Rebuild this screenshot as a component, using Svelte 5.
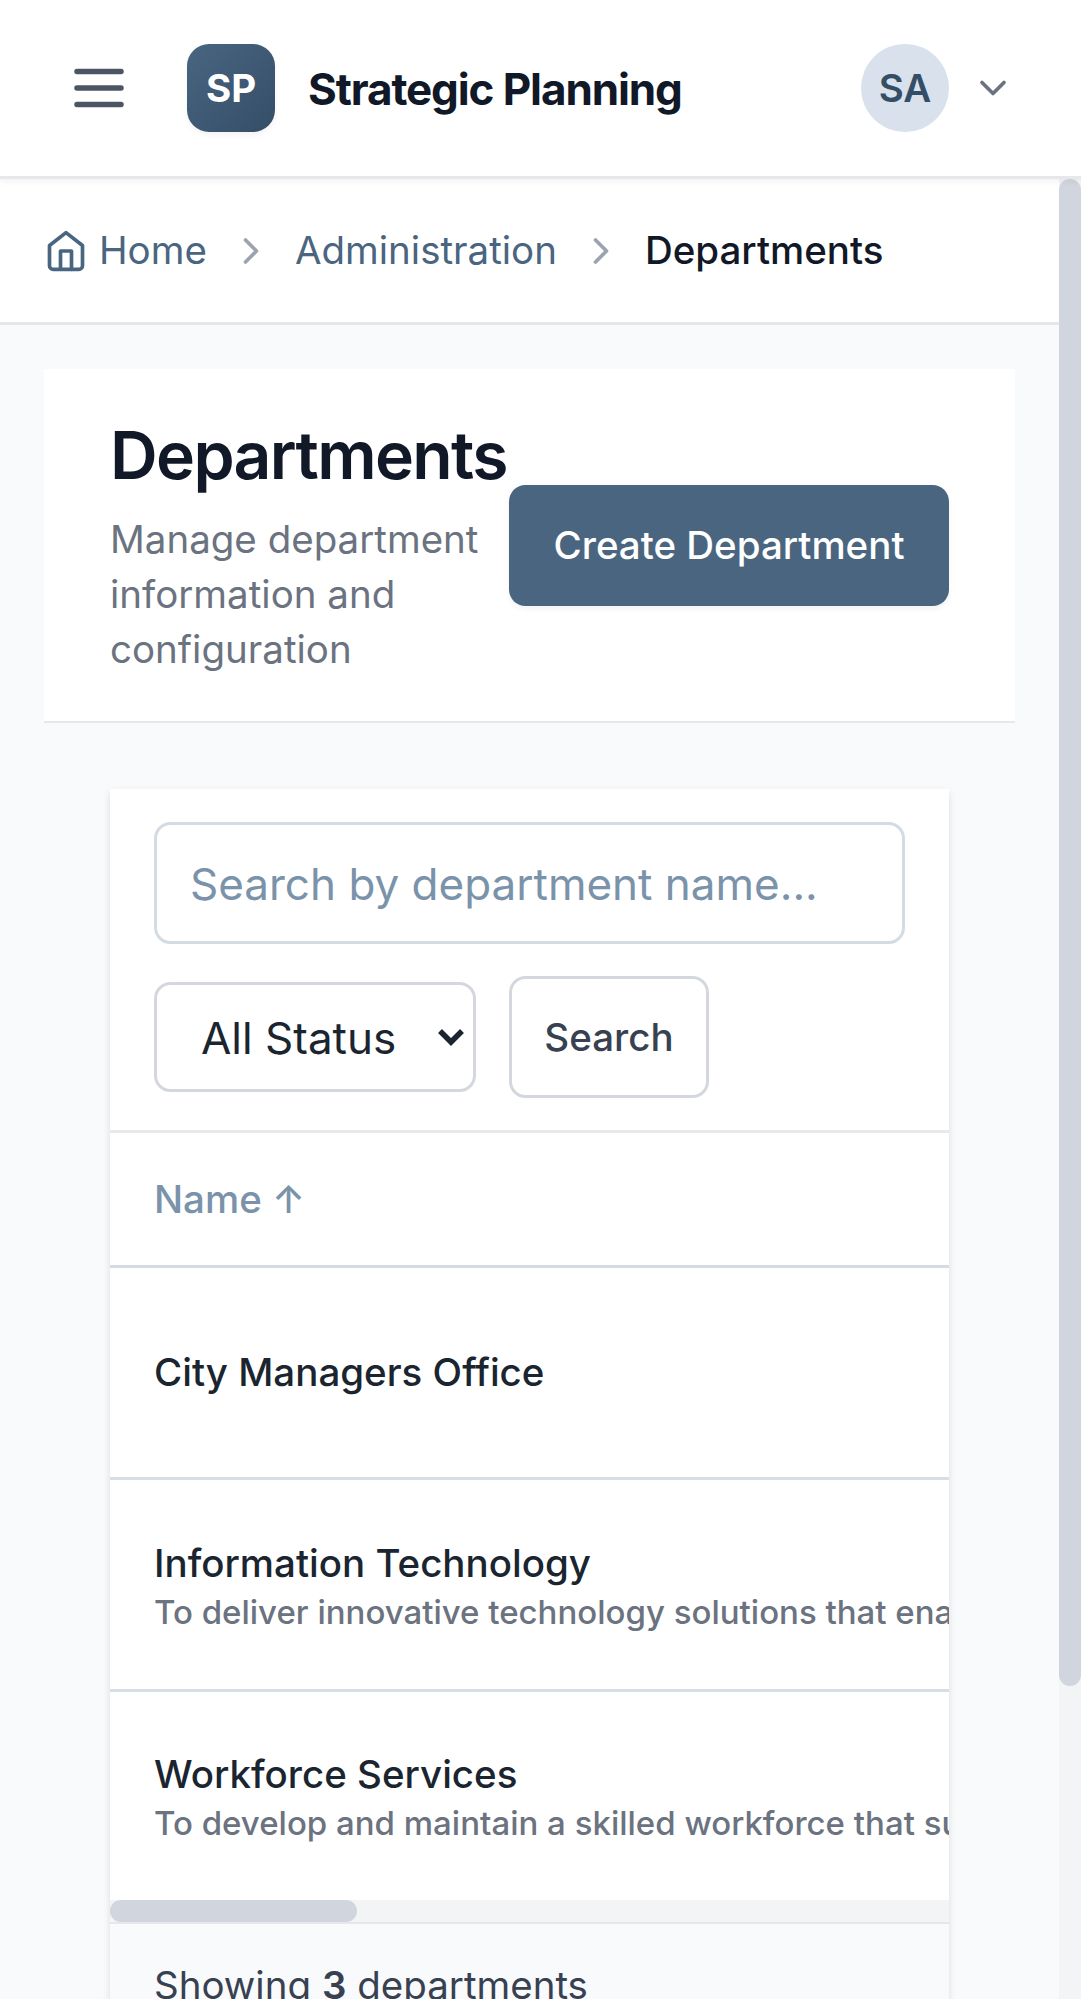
<script>
  const crumbs = ['Administration'];
  const departments = [
    { name: 'City Managers Office', mission: '' },
    {
      name: 'Information Technology',
      mission: 'To deliver innovative technology solutions that enable efficient city services'
    },
    {
      name: 'Workforce Services',
      mission: 'To develop and maintain a skilled workforce that supports the community'
    }
  ];
</script>

<div class="app">
  <header class="topbar">
    <button class="menu" aria-label="Open menu">
      <svg width="66" height="66" viewBox="0 0 24 24"><path d="M4 6h16M4 12h16M4 18h16" /></svg>
    </button>
    <div class="logo">SP</div>
    <div class="brand">Strategic Planning</div>
    <div class="user">
      <div class="avatar">SA</div>
      <svg width="44" height="44" viewBox="0 0 24 24"><path d="m6 9 6 6 6-6" /></svg>
    </div>
  </header>

  <div class="viewport">
    <main>
      <nav class="crumbs">
        <a class="home" href="#home">
          <svg width="44" height="44" viewBox="0 0 24 24">
            <path d="m3 9 9-7 9 7v11a2 2 0 0 1-2 2H5a2 2 0 0 1-2-2z" />
            <path d="M9 22V12h6v10" />
          </svg>
          <span>Home</span>
        </a>
        {#each crumbs as crumb}
          <svg class="sep" width="44" height="44" viewBox="0 0 24 24"><path d="m9 18 6-6-6-6" /></svg>
          <a href="#{crumb}">{crumb}</a>
        {/each}
        <svg class="sep" width="44" height="44" viewBox="0 0 24 24"><path d="m9 18 6-6-6-6" /></svg>
        <span class="current">Departments</span>
      </nav>

      <section class="page-head">
        <div class="intro">
          <h1>Departments</h1>
          <p>Manage department information and configuration</p>
        </div>
        <button class="primary">Create Department</button>
      </section>

      <section class="card">
        <div class="filters">
          <input type="text" placeholder="Search by department name..." />
          <div class="controls">
            <button class="select">
              <span>All Status</span>
              <svg width="28" height="20" viewBox="0 0 28 20"><path d="m3 4 11 11L25 4" /></svg>
            </button>
            <button class="search">Search</button>
          </div>
        </div>
        <div class="table">
          <div class="thead">Name ↑</div>
          {#each departments as dept}
            <div class="row">
              <div class="name">{dept.name}</div>
              {#if dept.mission}<div class="mission">{dept.mission}</div>{/if}
            </div>
          {/each}
        </div>
        <div class="hscroll"><div class="hthumb"></div></div>
        <footer>Showing <b>3</b> departments</footer>
      </section>
    </main>
    <div class="vscroll"><div class="vthumb"></div></div>
  </div>
</div>

<style>
  :global(body) {
    margin: 0;
    overflow: hidden;
  }
  .app {
    width: 1081px;
    height: 1999px;
    overflow: hidden;
    display: flex;
    flex-direction: column;
    font-family: Inter, sans-serif;
    font-size: 38.5px;
    line-height: 55px;
    color: #1a2530;
    background: #f9fafc;
  }
  .app * {
    box-sizing: border-box;
  }
  button {
    font: inherit;
    background: none;
    border: 0;
    padding: 0;
    margin: 0;
  }
  svg {
    display: block;
    flex: none;
    fill: none;
    stroke: currentColor;
    stroke-width: 2;
    stroke-linecap: round;
    stroke-linejoin: round;
  }

  .topbar {
    position: relative;
    z-index: 2;
    flex: none;
    height: 179px;
    padding: 0 66px 0 44px;
    display: flex;
    align-items: center;
    background: #fff;
    border-bottom: 3px solid #e5e7eb;
    box-shadow: 0 3px 6px rgba(0, 0, 0, 0.05);
  }
  .menu {
    padding: 22px;
    color: #4b5563;
  }
  .logo {
    width: 88px;
    height: 88px;
    margin-left: 33px;
    border-radius: 22px;
    display: grid;
    place-items: center;
    color: #fff;
    font-weight: 700;
    background: linear-gradient(135deg, #4a6580, #344e68);
    box-shadow: 0 3px 6px rgba(0, 0, 0, 0.05);
  }
  .brand {
    margin-left: 33px;
    padding-top: 2px;
    font-size: 44px;
    font-weight: 700;
    letter-spacing: -1.1px;
    color: #111827;
  }
  .user {
    margin-left: auto;
    display: flex;
    align-items: center;
    gap: 22px;
    color: #6b7280;
  }
  .avatar {
    width: 88px;
    height: 88px;
    border-radius: 50%;
    display: grid;
    place-items: center;
    font-weight: 600;
    color: #344e68;
    background: #d9e1ec;
  }

  .viewport {
    flex: 1;
    min-height: 0;
    display: flex;
  }
  main {
    flex: 1;
    min-width: 0;
    overflow: hidden;
  }
  .crumbs {
    height: 146px;
    padding: 0 44px;
    display: flex;
    align-items: center;
    gap: 22px;
    background: #fff;
    border-bottom: 3px solid #e5e7eb;
  }
  .crumbs a {
    color: #4a6580;
    text-decoration: none;
  }
  .home {
    display: flex;
    align-items: center;
    gap: 11px;
  }
  .sep {
    color: #9ca3af;
  }
  .current {
    font-weight: 500;
    color: #111827;
  }

  .page-head {
    height: 354px;
    margin: 44px 44px 66px;
    padding: 0 66px;
    display: flex;
    align-items: center;
    justify-content: space-between;
    background: #fff;
    border-bottom: 2px solid #e5e7eb;
  }
  .intro {
    width: 399px;
    flex: none;
    align-self: flex-start;
    padding-top: 53px;
  }
  h1 {
    margin: 0 0 24px;
    font-size: 66px;
    line-height: 66px;
    font-weight: 600;
    letter-spacing: -1.65px;
    color: #111827;
  }
  p {
    margin: 0;
    color: #6b7280;
  }
  .primary {
    flex: none;
    width: 440px;
    height: 121px;
    border-radius: 16.5px;
    font-weight: 500;
    color: #fff;
    background: #4a6580;
    box-shadow: 0 3px 6px rgba(0, 0, 0, 0.05);
  }

  .card {
    margin: 0 110px;
    height: 1400px;
    background: #fff;
    box-shadow: 0 3px 8px rgba(0, 0, 0, 0.1), 0 3px 6px -3px rgba(0, 0, 0, 0.1);
  }
  .filters {
    height: 344px;
    padding: 33px 44px 0;
    border-bottom: 3px solid #e7e9ed;
  }
  input {
    display: block;
    width: 100%;
    height: 122px;
    padding: 1px 33px 0;
    font: inherit;
    font-size: 44px;
    border: 3px solid #d3dbe3;
    border-radius: 16.5px;
    background: #fff;
  }
  input::placeholder {
    color: #7a93aa;
    opacity: 1;
  }
  .controls {
    margin-top: 32px;
    display: flex;
    align-items: center;
    gap: 33px;
  }
  .select {
    width: 322px;
    height: 110px;
    padding: 0 8px 0 44px;
    display: flex;
    align-items: center;
    justify-content: space-between;
    font-size: 44px;
    color: #1a2530;
    border: 3px solid #d4d8de;
    border-radius: 16.5px;
  }
  .select span {
    padding-top: 2px;
  }
  .select svg {
    stroke-width: 5.5;
    stroke-linecap: butt;
    stroke-linejoin: miter;
  }
  .search {
    width: 200px;
    height: 122px;
    font-weight: 500;
    color: #374151;
    border: 3px solid #d4d8de;
    border-radius: 16.5px;
  }

  .table {
    overflow: hidden;
    white-space: nowrap;
    font-weight: 500;
  }
  .thead {
    height: 135px;
    padding: 39px 44px 0;
    color: #7a93aa;
    border-bottom: 3px solid #d4dbe3;
  }
  .row {
    height: 211.75px;
    padding: 1px 44px 0;
    display: flex;
    flex-direction: column;
    justify-content: center;
    border-bottom: 3px solid #d7dee5;
  }
  .row:last-child {
    height: 208.5px;
    border-bottom: 0;
  }
  .mission {
    margin-top: -1px;
    font-size: 33px;
    line-height: 44px;
    color: #6b7280;
  }
  .hscroll {
    height: 22px;
    background: #f3f4f6;
  }
  .hthumb {
    width: 247px;
    height: 22px;
    border-radius: 11px;
    background: #d1d5dd;
  }
  footer {
    height: 130px;
    padding: 34px 44px;
    color: #374151;
    background: #f9fafc;
    border-top: 2px solid #e5e7eb;
  }
  footer b {
    font-weight: 600;
  }

  .vscroll {
    flex: none;
    width: 22px;
    background: #f3f4f6;
  }
  .vthumb {
    height: 1507px;
    border-radius: 11px;
    background: #d1d5dd;
  }
</style>
